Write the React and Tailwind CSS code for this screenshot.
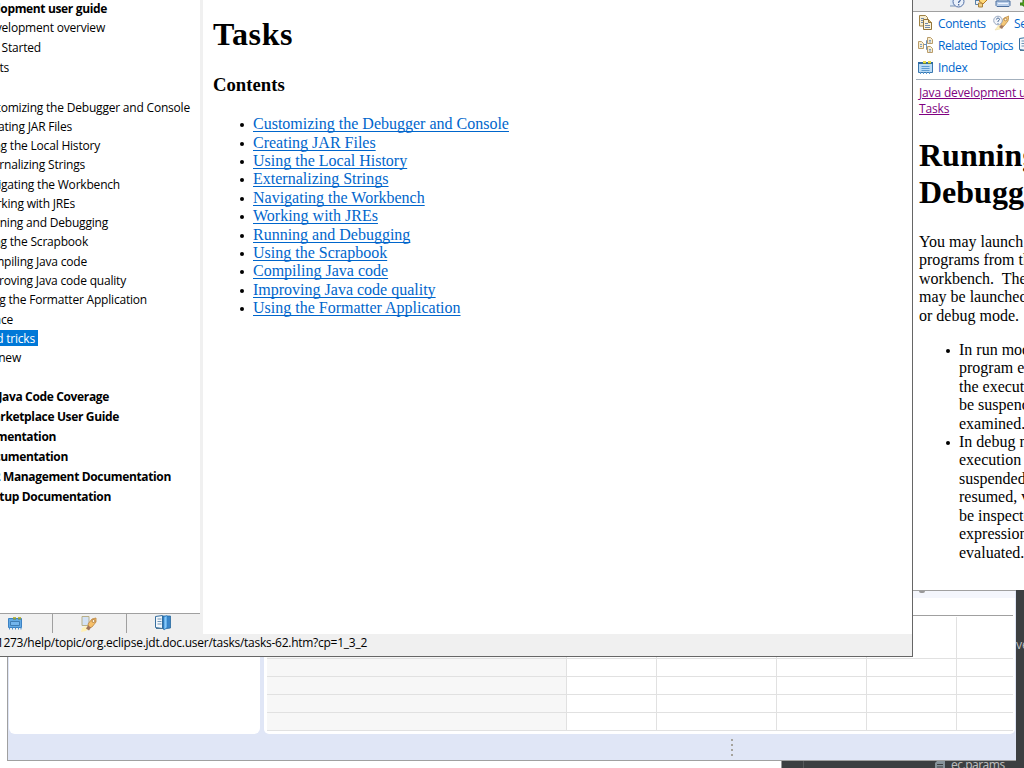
const TREE = [
  ["velopment user guide", 107, 18, "b"],
  ["development overview", 105, 19],
  ["g Started", 41, 20],
  ["epts", 9, 20],
  ["stomizing the Debugger and Console", 190, 40],
  ["eating JAR Files", 72, 19],
  ["sing the Local History", 100, 19],
  ["ternalizing Strings", 85, 19],
  ["avigating the Workbench", 120, 20],
  ["orking with JREs", 75, 19],
  ["unning and Debugging", 108, 19],
  ["sing the Scrapbook", 88, 19],
  ["ompiling Java code", 87, 20],
  ["mproving Java code quality", 126, 19],
  ["sing the Formatter Application", 147, 19],
  ["ence", 13, 20],
  ["and tricks", 38, 19, "s"],
  ["s new", 21, 19],
  ["Java Code Coverage", 109, 39, "b"],
  ["Marketplace User Guide", 119, 20, "b"],
  ["umentation", 56, 20, "b"],
  ["ocumentation", 68, 20, "b"],
  ["p2 Management Documentation", 171, 20, "b"],
  ["Setup Documentation", 111, 20, "b"],
];

const TASKS = [
  "Customizing the Debugger and Console",
  "Creating JAR Files",
  "Using the Local History",
  "Externalizing Strings",
  "Navigating the Workbench",
  "Working with JREs",
  "Running and Debugging",
  "Using the Scrapbook",
  "Compiling Java code",
  "Improving Java code quality",
  "Using the Formatter Application",
];

const Svg = ({ children }) => (
  <svg width="16" height="16" viewBox="0 0 16 16" className="shrink-0">{children}</svg>
);

const IndexIcon = () => (
  <Svg>
    <path d="M1.500 3.500h13v9h-13z" fill="#62a9e4" stroke="#3c82c4" />
    <path d="M3.500 6.500h9v4h-9z" fill="#74b5ec" stroke="#3f7cb3" />
    <path d="M6 2h3v2H6zM11 2h3v2h-3z" fill="#b9b84a" />
    <path d="M6 4h3M11 4h3" stroke="#6d8436" />
    <path d="M2.500 12.500v2M5.500 12.500v2M8.500 12.500v2M11.500 12.500v2M14 12.500v2" stroke="#4c8fcb" />
  </Svg>
);

const IndexLightIcon = () => (
  <Svg>
    <path d="M.5 4.500h14v9H.5z" fill="#bcdcf6" stroke="#3a78b0" />
    <path d="M3.500 7.500h8M3.500 9.500h8M3.500 11.500h8" stroke="#5c9bd1" />
    <path d="M0 3h15v2H0z" fill="#2f6ba5" />
    <path d="M5 2h3v2H5zM10 2h3v2h-3z" fill="#e6da45" />
    <path d="M5 4.500h3M10 4.500h3" stroke="#6d8c35" />
    <path d="M2.500 13v2M5.500 13v2M8.500 13v2M11.500 13v2" stroke="#5c9bd1" />
  </Svg>
);

const SearchTabIcon = () => (
  <Svg>
    <path d="M1 .500h7v9H1z" fill="#d3e2f5" stroke="#b9b08a" />
    <path d="m7 8 4-5 4-1v4l-4 5-3 1z" fill="#f7c069" stroke="#b98440" strokeWidth=".8" />
    <circle cx="12.500" cy="5" r="1.500" fill="#fff6dc" stroke="#a46c30" strokeWidth=".8" />
    <path d="m5 10 3 2-3 3-5 1 1-4z" fill="#fff0b4" />
    <path d="m7 9.500 3 2-2 3-3-2z" fill="#a0745a" />
  </Svg>
);

const RocketIcon = () => (
  <Svg>
    <path d="m8 8 3-5 5-2-1 5-4 5-3 1z" fill="#f6c879" stroke="#b98a48" strokeWidth=".8" />
    <circle cx="5" cy="5.500" r="4.300" fill="#f1f4fa" stroke="#9aa9c0" />
    <path d="M3.500 4.500Q3.500 3 5 3t1.500 1.500Q6.500 5.300 5 6v1M5 8v.8" fill="none" stroke="#54749d" />
    <circle cx="12.500" cy="4.500" r="1.300" fill="#fff6da" stroke="#a57335" strokeWidth=".7" />
    <path d="m6 10-4 5 5-1 2-3z" fill="#fff0b8" stroke="#ead9a8" strokeWidth=".6" />
    <path d="m8 10 3 1-2 3-3-2z" fill="#a57a60" />
  </Svg>
);

const BookIcon = () => (
  <Svg>
    <path d="M.500 1.500 7.500.500v13l-7-1z" fill="#f2f7fb" stroke="#376f9f" />
    <path d="M2.500 4h4M2.500 6.500h4M2.500 9h4" stroke="#6e93b4" />
    <path d="M8 1h7.500v12L8 14z" fill="#3b86c9" stroke="#28699e" strokeWidth=".8" />
    <path d="m9 2 3-1.500v12L9 15z" fill="#86c9fa" stroke="#2f83c9" strokeWidth=".7" />
    <path d="M1 13.500h7l1 1" fill="none" stroke="#4c7898" />
  </Svg>
);

const ContentsIcon = () => (
  <Svg>
    <path d="M1.500.500h6l2 2V11h-8z" fill="#f7edcf" stroke="#a08346" />
    <path d="M3 3.500h3M3 5.500h2M3 7.500h2" stroke="#7189ad" />
    <path d="M5.500 4.500h5l3 3v7h-8z" fill="#fbf3da" stroke="#93743b" />
    <path d="M10.500 4.500v3h3" fill="#dfba67" stroke="#93743b" />
    <path d="M7 8.500h3M7 10.500h5M7 12.500h5" stroke="#7189ad" />
  </Svg>
);

const RelatedIcon = () => (
  <Svg>
    <path d="M5 7.500h3M8.500 12.500V3.500h1.500M8.500 12.500H10" fill="none" stroke="#6f91b6" />
    <path d="M.500 4.500h3l2 2v5h-5zM9.500.500h3l2 2v4h-5zM9.500 9.500h3l2 2v4h-5z" fill="#f8edcf" stroke="#b99c6b" />
    <path d="M2 7.500h2M2 9.500h2M11 3.500h2M11 5h2M11 12.500h2M11 14h2" stroke="#7f9cc0" />
  </Svg>
);

const HelpIcon = () => (
  <Svg>
    <path d="M1 3h5v11H1" fill="#dce8f6" stroke="#7a93b4" />
    <circle cx="9.500" cy="9.500" r="5.500" fill="#e9f0fa" stroke="#526fa5" />
    <path d="M8 8q0-2 1.700-2t1.700 1.600Q11.400 9 9.700 10v1M9.700 12v1.500" fill="none" stroke="#3f609a" strokeWidth="1.200" />
  </Svg>
);

const SyncIcon = () => (
  <Svg>
    <path d="M3.500 3v9.500H8M3.500 8.500h4" fill="none" stroke="#5781aa" />
    <path d="M1 2h4v4H1zM6.500 11h4v4h-4z" fill="#f2cf83" stroke="#a7823f" />
    <path d="m7 9 4-4 4 3-4 4z" fill="#ffda79" stroke="#b77a28" />
  </Svg>
);

const PrintIcon = () => (
  <Svg>
    <path d="M3 2h10v8H3z" fill="#e4edfa" stroke="#7e9cc4" />
    <path d="M1 9h14v4.500l-1 1H2l-1-1z" fill="#b9cee9" stroke="#4b6f9f" />
    <path d="M3 11.500h10" stroke="#eef5ff" />
  </Svg>
);

const Bullets = ({ children }) => (
  <li className="flex">
    <i className="ml-[27px] mr-[9px] mt-[8px] size-[4px] shrink-0 rounded-full bg-black" />
    <div>{children}</div>
  </li>
);

function HelpWindow() {
  return (
    <section className="absolute left-0 top-0 flex h-[657px] w-[913px] flex-col border-b border-r border-[#666] bg-white">
      <div className="flex h-[634px] shrink-0">
        <nav className="flex w-[200px] shrink-0 flex-col justify-between overflow-hidden">
          <div className="font-['Open_Sans','Noto_Sans',sans-serif] text-[12px] tracking-[-0.2px]">
            {TREE.map(([label, right, height, kind], i) => (
              <div key={i} className="flex items-end justify-end whitespace-nowrap" style={{ width: right, height }}>
                <span
                  className={
                    kind === "b"
                      ? "leading-[19px] font-bold tracking-[-0.35px]"
                      : kind === "s"
                        ? "mb-[2px] bg-[#0078d7] pr-[3px] pt-px leading-[15px] text-white"
                        : "leading-[19px]"
                  }
                >
                  {label}
                </span>
              </div>
            ))}
          </div>
          <div className="flex h-[21px] border-t border-[#a0a0a0] bg-[#f0f0f0]">
            <div className="h-[19px] w-[53px] border-r border-[#a0a0a0] pl-[7px] pt-px"><IndexIcon /></div>
            <div className="h-[19px] w-[74px] border-r border-[#a0a0a0] pl-[28px] pt-[2px]"><SearchTabIcon /></div>
            <div className="h-[19px] w-[73px] pl-[28px] pt-px"><BookIcon /></div>
          </div>
        </nav>
        <div className="w-[3px] shrink-0 bg-[#f0f0f0]" />
        <main className="flex-1 pl-[10px] font-['Liberation_Serif',serif] text-black">
          <h1 className="pt-[16px] text-[32px] font-bold leading-[37px] tracking-[0.6px]">Tasks</h1>
          <h3 className="mt-[21px] text-[18.72px] font-bold leading-[22px]">Contents</h3>
          <ul className="mt-[19.15px] text-[16px] leading-[18.4px]">
            {TASKS.map((t) => (
              <Bullets key={t}><a className="text-[#0066cc] underline underline-offset-2 [text-decoration-skip-ink:none]">{t}</a></Bullets>
            ))}
          </ul>
        </main>
      </div>
      <footer className="h-[22px] overflow-hidden whitespace-nowrap bg-[#f0f0f0] font-['Open_Sans','Noto_Sans',sans-serif] text-[12px] leading-[18px] tracking-[-0.26px]">
        <div className="flex w-[367px] justify-end">51273/help/topic/org.eclipse.jdt.doc.user/tasks/tasks-62.htm?cp=1_3_2</div>
      </footer>
    </section>
  );
}

function TopicWindow() {
  return (
    <section className="absolute left-[912px] top-0 h-[590px] w-[112px] overflow-hidden border-l border-[#666] bg-white">
      <div className="flex h-[12px] w-[140px] items-end gap-[7px] overflow-hidden border-b border-[#a0a0a0] bg-[#f0f0f0] pb-[3px] pl-[36px]">
        <HelpIcon /><SyncIcon /><PrintIcon />
        <svg width="8" height="8" className="ml-[2px] shrink-0"><path d="M0 3h3V0h3v6H3V5H0z" fill="#55a51d" stroke="#377817" /></svg>
      </div>
      <div className="flex w-[180px] flex-col pl-[5px] font-['Open_Sans','Noto_Sans',sans-serif] text-[12px] tracking-[-0.35px] text-[#0066cc]">
        <div className="flex h-[22px] items-center"><ContentsIcon /><span className="ml-[4px] w-[55px] pt-[2px]">Contents</span><RocketIcon /><span className="ml-[5px] pt-[2px]">Search</span></div>
        <div className="flex h-[22px] items-center"><RelatedIcon /><span className="ml-[4px] w-[81px] whitespace-nowrap pt-[2px] tracking-[-0.42px]">Related Topics</span><BookIcon /></div>
        <div className="flex h-[22px] items-center"><IndexLightIcon /><span className="ml-[4px] pt-[2px]">Index</span></div>
      </div>
      <div className="ml-[3px] mt-px h-px w-[140px] bg-[#a3b0bd]" />
      <div className="ml-[6px] mt-[5px] w-[170px] whitespace-nowrap font-['Open_Sans','Noto_Sans',sans-serif] text-[12px] leading-[16px] tracking-[-0.15px] text-[#800080] underline">
        Java development user<br />Tasks
      </div>
      <div className="ml-[6px] w-[180px] whitespace-nowrap font-['Liberation_Serif',serif] text-[16px] leading-[18.4px] text-black">
        <h1 className="mt-[20px] text-[32px] font-bold leading-[37px]">Running and<br />Debugging</h1>
        <p className="mt-[22px]">You may launch Java<br />programs from the<br />workbench.&nbsp; The<br />may be launched in<br />or debug mode.</p>
        <ul className="mt-[16px]">
          <Bullets>In run mode, the<br />program executes<br />the execution may<br />be suspended or<br />examined.</Bullets>
          <Bullets>In debug mode,<br />execution may be<br />suspended and<br />resumed, variables<br />be inspected, and<br />expressions may be<br />evaluated.</Bullets>
        </ul>
      </div>
    </section>
  );
}

function WorkbenchWindow() {
  return (
    <section className="absolute left-[7px] top-[590px] flex h-[171px] w-[1009px] gap-[4px] border-b border-l border-t border-[#a0a0a0] bg-[#e0e6f6] pl-px">
      <div className="h-[143px] w-[251px] shrink-0 rounded-b-[6px] bg-white" />
      <div className="h-[143px] w-[751px] shrink-0 overflow-hidden rounded-b-[5px] bg-white">
        <div className="flex h-[7px] items-start overflow-hidden bg-[#f4f6fc] pl-[655px]">
          <div className="h-[2px] w-[6px] rounded-b-full bg-[#999]" />
        </div>
        <div className="ml-[3px] mt-[17px] w-[746px] border-t border-[#a0a0a0] pt-px">
          {[42, 18, 18, 18, 18].map((h, i) => (
            <div key={i} className="flex border-b border-[#e1e1e1]" style={{ height: h }}>
              <div className="w-[300px] border-r border-[#e1e1e1] bg-[#f7f7f7]" />
              <div className="w-[90px] border-r border-[#e1e1e1]" />
              <div className="w-[120px] border-r border-[#e1e1e1]" />
              <div className="w-[90px] border-r border-[#e1e1e1]" />
              <div className="w-[90px] border-r border-[#e1e1e1]" />
            </div>
          ))}
        </div>
      </div>
      <div className="absolute left-[723px] top-[148px] flex flex-col gap-[3px]">
        {[0, 1, 2, 3].map((i) => <i key={i} className="size-[2px] bg-[#a5a39c]" />)}
      </div>
    </section>
  );
}

function EditorWindow() {
  return (
    <section className="absolute left-[781px] top-[590px] flex h-[178px] w-[243px] flex-col justify-between overflow-hidden border-l border-[#999] bg-[#3c3f41] font-['Noto_Sans',sans-serif] text-[12px] text-[#bbb]">
      <div className="pl-[234px] pt-[47px] leading-[16px]">ve</div>
      <div className="flex h-[8px] justify-between">
        <div className="ml-[21px] w-px bg-[#55585a]" />
        <div className="flex w-[89px] gap-[6px]">
          <svg width="10" height="12" className="shrink-0"><path d="M3 0h7v12H0V3z" fill="#87939a" /><path d="M2 4.500h6M2 7h6" stroke="#3c3f41" /></svg>
          <span className="-mt-[3px] leading-[16px] tracking-[-0.5px]">ec.params</span>
        </div>
      </div>
    </section>
  );
}

export default function App() {
  return (
    <div className="relative h-[768px] w-[1024px] overflow-hidden bg-white text-black">
      <EditorWindow />
      <WorkbenchWindow />
      <TopicWindow />
      <HelpWindow />
    </div>
  );
}
